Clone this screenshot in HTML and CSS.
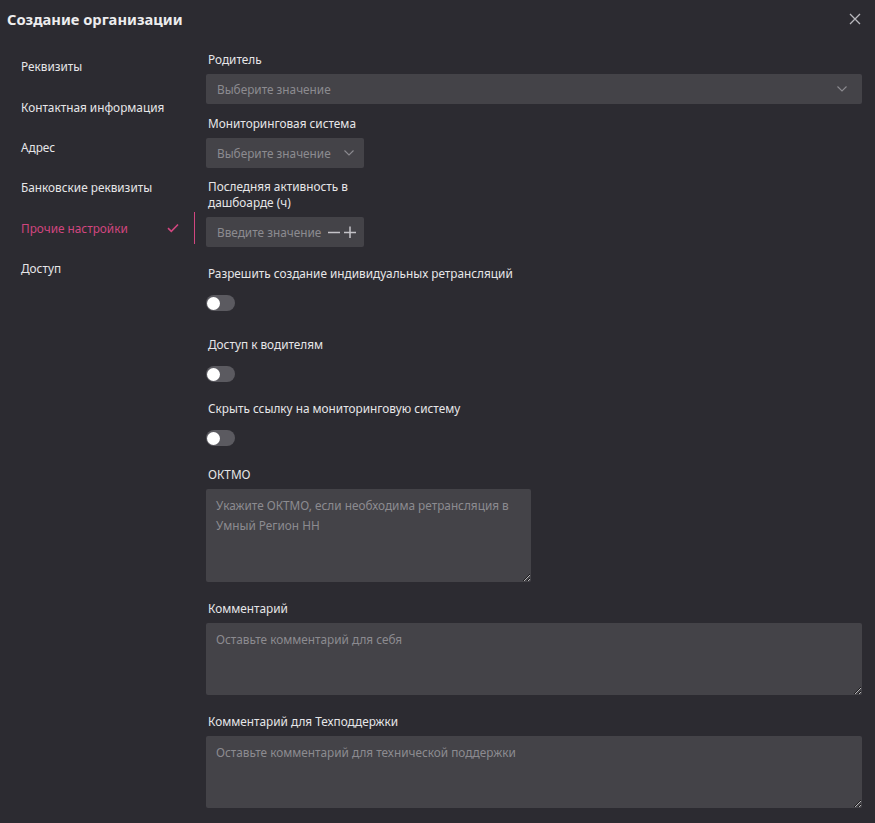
FILE: index.html
```html
<!DOCTYPE html>
<html lang="ru">
<head>
<meta charset="utf-8">
<title>Создание организации</title>
<link rel="stylesheet" href="styles.css">
</head>
<body>
<div class="modal">
  <header class="modal-header">
    <h1 class="modal-title">Создание организации</h1>
    <button class="close-btn" aria-label="Закрыть">
      <svg width="12" height="12" viewBox="0 0 12 12"><path d="M1 1L11 11M11 1L1 11" stroke="#b9b8bd" stroke-width="1.3" fill="none"/></svg>
    </button>
  </header>
  <div class="modal-body">
    <nav class="sidebar">
      <div class="nav-item">Реквизиты</div>
      <div class="nav-item">Контактная информация</div>
      <div class="nav-item">Адрес</div>
      <div class="nav-item">Банковские реквизиты</div>
      <div class="nav-item active">Прочие настройки
        <svg class="check" width="12" height="10" viewBox="0 0 12 10"><path d="M1 5.2L4.3 8.3L11 1.5" stroke="#d1467f" stroke-width="1.6" fill="none"/></svg>
      </div>
      <div class="nav-item">Доступ</div>
    </nav>
    <main class="content">
      <div class="field first-field">
        <div class="label">Родитель</div>
        <div class="select full">
          <span class="placeholder">Выберите значение</span>
          <svg class="chev" width="10" height="6" viewBox="0 0 10 6"><path d="M0.5 0.5L5 5L9.5 0.5" stroke="#8c8b90" stroke-width="1.1" fill="none"/></svg>
        </div>
      </div>
      <div class="field">
        <div class="label">Мониторинговая система</div>
        <div class="select short">
          <span class="placeholder">Выберите значение</span>
          <svg class="chev" width="10" height="6" viewBox="0 0 10 6"><path d="M0.5 0.5L5 5L9.5 0.5" stroke="#8c8b90" stroke-width="1.1" fill="none"/></svg>
        </div>
      </div>
      <div class="field">
        <div class="label narrow">Последняя активность в дашбоарде (ч)</div>
        <div class="number short">
          <span class="placeholder">Введите значение</span>
          <span class="steppers">
            <svg width="12" height="12" viewBox="0 0 12 12"><path d="M0 6.5H12" stroke="#c4c3c8" stroke-width="1.5"/></svg>
            <svg width="12" height="12" viewBox="0 0 12 12"><path d="M0 6.5H12M6 0.5V12.5" stroke="#c4c3c8" stroke-width="1.5"/></svg>
          </span>
        </div>
      </div>
      <div class="field toggle-field first-toggle">
        <div class="label">Разрешить создание индивидуальных ретрансляций</div>
        <div class="toggle"><span class="knob"></span></div>
      </div>
      <div class="field toggle-field">
        <div class="label">Доступ к водителям</div>
        <div class="toggle"><span class="knob"></span></div>
      </div>
      <div class="field toggle-field last-toggle">
        <div class="label">Скрыть ссылку на мониторинговую систему</div>
        <div class="toggle"><span class="knob"></span></div>
      </div>
      <div class="field spaced">
        <div class="label">ОКТМО</div>
        <textarea class="textarea oktmo" placeholder="Укажите ОКТМО, если необходима ретрансляция в Умный Регион НН"></textarea>
      </div>
      <div class="field spaced">
        <div class="label">Комментарий</div>
        <textarea class="textarea wide" placeholder="Оставьте комментарий для себя"></textarea>
      </div>
      <div class="field spaced">
        <div class="label">Комментарий для Техподдержки</div>
        <textarea class="textarea wide" placeholder="Оставьте комментарий для технической поддержки"></textarea>
      </div>
    </main>
  </div>
</div>
</body>
</html>
```

FILE: styles.css
```css
* { box-sizing: border-box; }
html, body {
  margin: 0;
  padding: 0;
  background: #2c2b31;
}
body {
  font-family: "Noto Sans", "Open Sans", sans-serif;
  font-size: 11.8px;
  color: #e6e6e8;
}
.modal {
  width: 875px;
  min-height: 823px;
  background: #2c2b31;
}
.modal-header {
  display: flex;
  align-items: center;
  justify-content: space-between;
  height: 38px;
  padding: 0 14px 0 7px;
}
.modal-title {
  margin: 0;
  font-size: 14.7px;
  font-weight: 700;
  color: #ededee;
  line-height: 22px;
}
.close-btn {
  background: none;
  border: none;
  padding: 0;
  width: 12px;
  height: 12px;
  display: flex;
}
.modal-body {
  display: flex;
  gap: 10px;
  padding-right: 13px;
}
.sidebar {
  width: 196px;
  flex: none;
  padding-top: 8px;
}
.nav-item {
  position: relative;
  height: 40.4px;
  display: flex;
  align-items: center;
  padding-left: 21px;
  color: #e6e6e8;
}
.nav-item.active {
  color: #d1467f;
}
.nav-item.active::after {
  content: "";
  position: absolute;
  right: 1px;
  top: 4px;
  bottom: 4px;
  width: 1px;
  background: #d1467f;
}
.check {
  position: absolute;
  left: 167px;
  top: 15px;
}
.content {
  flex: 1;
  display: flex;
  flex-direction: column;
  padding-top: 13px;
}
.field {
  display: flex;
  flex-direction: column;
  margin-bottom: 10px;
}
.first-field { margin-bottom: 11px; }
.label {
  line-height: 16px;
  margin-bottom: 7px;
  padding-left: 2px;
  color: #e6e6e8;
}
.label.narrow {
  width: 175px;
}
.select, .number {
  height: 30px;
  background: #444348;
  border-radius: 2px;
  display: flex;
  align-items: center;
  padding: 0 11px;
}
.select { justify-content: space-between; }
.select.full .chev { margin-right: 4px; }
.select.short { padding-right: 10px; }
.short { width: 158px; }
.placeholder {
  color: #8c8b90;
  white-space: nowrap;
}
.number { padding-right: 9px; }
.steppers {
  display: flex;
  gap: 4px;
  margin-left: 7px;
}
.toggle-field .label { margin-bottom: 14px; }
.toggle-field { margin-bottom: 18px; }
.first-toggle { margin-top: 8px; margin-bottom: 25px; }
.last-toggle { margin-bottom: 20px; }
.toggle {
  position: relative;
  width: 29px;
  height: 16px;
  border-radius: 8px;
  background: #5b5a60;
}
.knob {
  position: absolute;
  left: 1px;
  top: 1.5px;
  width: 13px;
  height: 13px;
  border-radius: 50%;
  background: #ffffff;
}
.spaced { margin-bottom: 18px; }
.textarea {
  display: block;
  font-family: "Noto Sans", "Open Sans", sans-serif;
  font-size: 11.8px;
  line-height: 20px;
  background: #444348;
  color: #e6e6e8;
  border: none;
  border-radius: 2px;
  padding: 6px 10px;
  outline: none;
  color-scheme: dark;
}
.textarea::placeholder { color: #8c8b90; }
.textarea.oktmo { width: 325px; height: 93px; }
.textarea.wide { width: 100%; height: 72px; }
```
